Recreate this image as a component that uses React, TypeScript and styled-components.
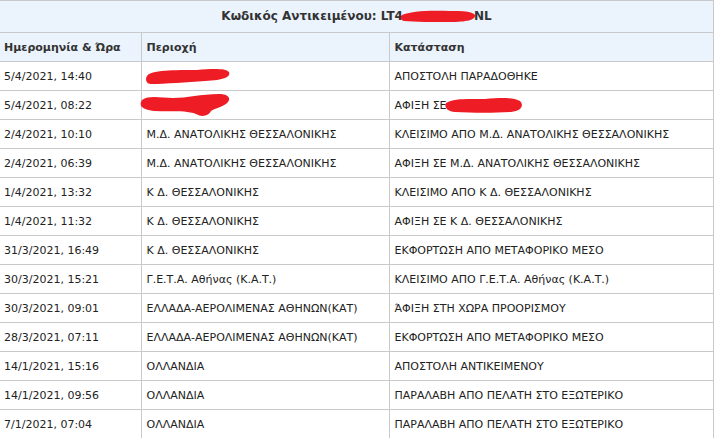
import styled, { createGlobalStyle } from 'styled-components'

const GlobalStyle = createGlobalStyle`
  html, body {
    margin: 0;
    padding: 0;
    background: #ffffff;
  }
  body {
    font-family: "DejaVu Sans", "Noto Sans", sans-serif;
    font-size: 11px;
    color: #222222;
  }
`

const Table = styled.table`
  width: 714px;
  border-collapse: collapse;
  table-layout: fixed;
  border-top: 1px solid #c9c9c9;
  border-right: 1px solid #c9c9c9;
`

const TitleCell = styled.th`
  height: 31px;
  padding: 0;
  background-color: #ebf3fd;
  color: #333333;
  font-size: 12px;
  font-weight: bold;
  text-align: center;
  vertical-align: middle;
  border-bottom: 1px solid #c9c9c9;
  white-space: nowrap;
`

const HeadCell = styled.th<{ $first?: boolean }>`
  height: 28px;
  padding: 0 4px 0 ${(p) => (p.$first ? 4 : 5)}px;
  background-color: #ebf3fd;
  color: #333333;
  font-weight: bold;
  text-align: left;
  vertical-align: middle;
  border-bottom: 1px solid #c9c9c9;
  border-left: ${(p) => (p.$first ? 'none' : '1px solid #c9c9c9')};
  white-space: nowrap;
`

const Cell = styled.td<{ $first?: boolean }>`
  height: 28px;
  padding: 0 4px 0 ${(p) => (p.$first ? 4 : 5)}px;
  vertical-align: middle;
  border-bottom: 1px solid #c9c9c9;
  border-left: ${(p) => (p.$first ? 'none' : '1px solid #c9c9c9')};
  white-space: nowrap;
  overflow: visible;
  position: relative;
`

const Scribble = styled.svg<{ $w: number; $h: number }>`
  display: inline-block;
  width: ${(p) => p.$w}px;
  height: ${(p) => p.$h}px;
  vertical-align: middle;
`

const OverScribble = styled.svg`
  position: absolute;
  left: -3px;
  top: 3px;
  width: 92px;
  height: 25px;
`

const RED = '#ee1c24'

const TitleBlot = () => (
  <Scribble $w={76} $h={15} viewBox="0 0 76 15" style={{ margin: '0 -2px 0 -3px' }}>
    <path d="M2 6 C10 2 30 1 50 2 C62 2 72 2 75 6 C76 11 66 13 50 13 C34 13 14 13 4 12 C0 11 0 8 2 6 Z" fill={RED} />
  </Scribble>
)

const RowOneBlot = () => (
  <Scribble $w={86} $h={17} viewBox="0 0 86 17" style={{ marginLeft: -2 }}>
    <path d="M2 8 C5 2 30 2 52 2 C66 1 80 0 84 4 C86 9 79 12 60 13 C42 14 20 16 6 16 C1 16 0 11 2 8 Z" fill={RED} />
  </Scribble>
)

const RowTwoBlot = () => (
  <OverScribble viewBox="0 0 92 25">
    <path d="M3 6 C10 1 22 4 34 4 C48 4 62 0 80 0 C89 0 92 4 89 8 C85 13 76 14 72 17 C70 21 64 24 57 20 C47 16 30 18 15 17 C4 16 -1 12 3 6 Z" fill={RED} />
  </OverScribble>
)

const ArrivalBlot = () => (
  <Scribble $w={78} $h={17} viewBox="0 0 78 17" style={{ marginLeft: -2 }}>
    <path d="M1 6 C8 1 24 2 40 2 C54 1 68 0 75 4 C79 8 77 14 66 15 C50 16 28 16 10 15 C2 14 -1 10 1 6 Z" fill={RED} />
  </Scribble>
)

type Row = { date: string; area: React.ReactNode; status: React.ReactNode }

const rows: Row[] = [
  { date: '5/4/2021, 14:40', area: <RowOneBlot />, status: 'ΑΠΟΣΤΟΛΗ ΠΑΡΑΔΟΘΗΚΕ' },
  { date: '5/4/2021, 08:22', area: <RowTwoBlot />, status: <>ΑΦΙΞΗ ΣΕ<ArrivalBlot /></> },
  { date: '2/4/2021, 10:10', area: 'Μ.Δ. ΑΝΑΤΟΛΙΚΗΣ ΘΕΣΣΑΛΟΝΙΚΗΣ', status: 'ΚΛΕΙΣΙΜΟ ΑΠΟ Μ.Δ. ΑΝΑΤΟΛΙΚΗΣ ΘΕΣΣΑΛΟΝΙΚΗΣ' },
  { date: '2/4/2021, 06:39', area: 'Μ.Δ. ΑΝΑΤΟΛΙΚΗΣ ΘΕΣΣΑΛΟΝΙΚΗΣ', status: 'ΑΦΙΞΗ ΣΕ Μ.Δ. ΑΝΑΤΟΛΙΚΗΣ ΘΕΣΣΑΛΟΝΙΚΗΣ' },
  { date: '1/4/2021, 13:32', area: 'Κ Δ. ΘΕΣΣΑΛΟΝΙΚΗΣ', status: 'ΚΛΕΙΣΙΜΟ ΑΠΟ Κ Δ. ΘΕΣΣΑΛΟΝΙΚΗΣ' },
  { date: '1/4/2021, 11:32', area: 'Κ Δ. ΘΕΣΣΑΛΟΝΙΚΗΣ', status: 'ΑΦΙΞΗ ΣΕ Κ Δ. ΘΕΣΣΑΛΟΝΙΚΗΣ' },
  { date: '31/3/2021, 16:49', area: 'Κ Δ. ΘΕΣΣΑΛΟΝΙΚΗΣ', status: 'ΕΚΦΟΡΤΩΣΗ ΑΠΟ ΜΕΤΑΦΟΡΙΚΟ ΜΕΣΟ' },
  { date: '30/3/2021, 15:21', area: 'Γ.Ε.Τ.Α. Αθήνας (Κ.Α.Τ.)', status: 'ΚΛΕΙΣΙΜΟ ΑΠΟ Γ.Ε.Τ.Α. Αθήνας (Κ.Α.Τ.)' },
  { date: '30/3/2021, 09:01', area: 'ΕΛΛΑΔΑ-ΑΕΡΟΛΙΜΕΝΑΣ ΑΘΗΝΩΝ(ΚΑΤ)', status: 'ΆΦΙΞΗ ΣΤΗ ΧΩΡΑ ΠΡΟΟΡΙΣΜΟΥ' },
  { date: '28/3/2021, 07:11', area: 'ΕΛΛΑΔΑ-ΑΕΡΟΛΙΜΕΝΑΣ ΑΘΗΝΩΝ(ΚΑΤ)', status: 'ΕΚΦΟΡΤΩΣΗ ΑΠΟ ΜΕΤΑΦΟΡΙΚΟ ΜΕΣΟ' },
  { date: '14/1/2021, 15:16', area: 'ΟΛΛΑΝΔΙΑ', status: 'ΑΠΟΣΤΟΛΗ ΑΝΤΙΚΕΙΜΕΝΟΥ' },
  { date: '14/1/2021, 09:56', area: 'ΟΛΛΑΝΔΙΑ', status: 'ΠΑΡΑΛΑΒΗ ΑΠΟ ΠΕΛΑΤΗ ΣΤΟ ΕΞΩΤΕΡΙΚΟ' },
  { date: '7/1/2021, 07:04', area: 'ΟΛΛΑΝΔΙΑ', status: 'ΠΑΡΑΛΑΒΗ ΑΠΟ ΠΕΛΑΤΗ ΣΤΟ ΕΞΩΤΕΡΙΚΟ' },
]

const App = () => {
  return (
    <>
      <GlobalStyle />
      <Table>
        <colgroup>
          <col style={{ width: 141 }} />
          <col style={{ width: 248 }} />
          <col />
        </colgroup>
        <thead>
          <tr>
            <TitleCell colSpan={3}>
              Κωδικός Αντικειμένου: LT4<TitleBlot />NL
            </TitleCell>
          </tr>
          <tr>
            <HeadCell $first>Ημερομηνία &amp; Ώρα</HeadCell>
            <HeadCell>Περιοχή</HeadCell>
            <HeadCell>Κατάσταση</HeadCell>
          </tr>
        </thead>
        <tbody>
          {rows.map((r, i) => (
            <tr key={i}>
              <Cell $first>{r.date}</Cell>
              <Cell>{r.area}</Cell>
              <Cell>{r.status}</Cell>
            </tr>
          ))}
        </tbody>
      </Table>
    </>
  )
}

export default App
